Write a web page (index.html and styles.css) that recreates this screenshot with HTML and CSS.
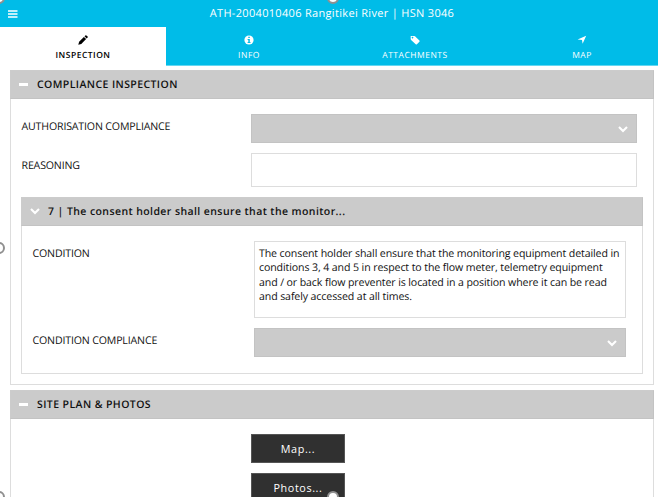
FILE: index.html
```
<!DOCTYPE html>
<html lang="en">
<head>
<meta charset="utf-8">
<title>Inspection</title>
<link rel="stylesheet" href="styles.css">
</head>
<body>
<header class="topbar">
  <svg class="menu" width="10" height="8" viewBox="0 0 10 8"><path d="M0 1h9.5M0 4h9.5M0 7h9.5" stroke="currentColor" stroke-width="1.4"/></svg>
  <h1 class="title">ATH-2004010406 Rangitikei River | HSN 3046</h1>
</header>
<nav class="tabs">
  <a class="tab active">
    <svg width="10" height="10" viewBox="0 0 10 10"><path d="M.3 9.7l.8-3 4.8-4.8 2.2 2.2-4.8 4.8zM6.5 1.3l.9-.9q.5-.5 1 0l1.2 1.2q.5.5 0 1l-.9.9z" fill="currentColor"/></svg>
    <span>INSPECTION</span>
  </a>
  <a class="tab">
    <svg width="10" height="10" viewBox="0 0 10 10"><circle cx="5" cy="5" r="4.6" fill="currentColor"/><path d="M4.3 1.7h1.5v1.4H4.3zM3.6 4h2.2v3h.7v1.1H3.6V7h.7V5h-.7z" class="cutout"/></svg>
    <span>INFO</span>
  </a>
  <a class="tab">
    <svg width="10" height="10" viewBox="0 0 10 10"><path fill-rule="evenodd" d="M.8.9h3.3q.5 0 .9.4l4.4 4.3q.6.6 0 1.2L6.9 9.3q-.6.6-1.2 0L1.1 4.9q-.4-.4-.4-.9V1zM2.5 1.8a.8.8 0 1 0 .01 0z" fill="currentColor"/></svg>
    <span>ATTACHMENTS</span>
  </a>
  <a class="tab">
    <svg width="10" height="10" viewBox="0 0 10 10"><path d="M9.2.8L5.6 8.8 5 5.1.6 4.5z" fill="currentColor"/></svg>
    <span>MAP</span>
  </a>
</nav>
<main class="content">
  <section class="panel">
    <h2 class="panel-head"><i class="dash"></i><span>COMPLIANCE INSPECTION</span></h2>
    <div class="panel-body">
      <div class="row">
        <label>AUTHORISATION COMPLIANCE</label>
        <div class="select"><svg width="10" height="7" viewBox="0 0 10 7"><path d="M1 1l4 4 4-4" class="chev"/></svg></div>
      </div>
      <div class="row">
        <label>REASONING</label>
        <div class="text reason"></div>
      </div>
      <section class="panel nested">
        <h2 class="panel-head"><svg width="10" height="7" viewBox="0 0 10 7"><path d="M1 1l4 4 4-4" class="chev"/></svg><span>7 | The consent holder shall ensure that the monitor...</span></h2>
        <div class="panel-body">
          <div class="row">
            <label>CONDITION</label>
            <div class="text condition">The consent holder shall ensure that the monitoring equipment detailed in<br>conditions 3, 4 and 5 in respect to the flow meter, telemetry equipment<br>and / or back flow preventer is located in a position where it can be read<br>and safely accessed at all times.</div>
          </div>
          <div class="row">
            <label>CONDITION COMPLIANCE</label>
            <div class="select"><svg width="10" height="7" viewBox="0 0 10 7"><path d="M1 1l4 4 4-4" class="chev"/></svg></div>
          </div>
        </div>
      </section>
    </div>
  </section>
  <section class="panel photos">
    <h2 class="panel-head"><i class="dash"></i><span>SITE PLAN &amp; PHOTOS</span></h2>
    <div class="buttons">
      <button>Map...</button>
      <button>Photos...</button>
    </div>
  </section>
</main>
<i class="handle top left"></i>
<i class="handle top center"></i>
<i class="handle middle left"></i>
<i class="handle bottom left"></i>
<i class="handle bottom center"></i>
</body>
</html>
```
FILE: styles.css
```
* { box-sizing: border-box; }
body {
  position: relative;
  margin: 0;
  width: 658px;
  height: 497px;
  overflow: hidden;
  background: #fff;
  color: #111;
  font-family: "Open Sans", sans-serif;
  font-size: 10.6px;
  text-rendering: geometricPrecision;
}
svg { display: block; flex: none; }
.topbar {
  height: 27px;
  display: grid;
  grid-template-columns: 30px 1fr 24px;
  align-items: center;
  background: #00bce8;
  color: #fff;
}
.menu { margin-left: 8px; }
.title {
  margin: 0;
  text-align: center;
  font-size: 11px;
  font-weight: 500;
  letter-spacing: .32px;
}
.tabs {
  display: grid;
  grid-template-columns: 166px 166px 166px 168px;
  height: 39px;
  background: #00bce8;
  border-bottom: 1px solid #64d7f1;
  color: #fff;
}
.tab {
  display: flex;
  flex-direction: column;
  align-items: center;
  padding-top: 8px;
  gap: 5px;
  font-size: 8.5px;
  line-height: 12px;
  font-weight: 500;
  letter-spacing: .5px;
}
.tab.active {
  margin-bottom: -1px;
  background: #fff;
  color: #000;
  font-weight: 600;
}
.cutout { fill: #00bce8; }
.content {
  padding: 4px 4px 0 10px;
}
.panel {
  border: 1px solid #ddd;
  height: 315px;
}
.panel-head {
  display: flex;
  align-items: center;
  gap: 8px;
  height: 29px;
  margin: -1px -1px 0;
  padding: 0 0 0 8px;
  background: #cbcbcb;
  border: 1px solid #c3c3c3;
  border-color: #ccc #c3c3c3 #c3c3c3 #ccc;
  color: #111;
  font-size: 10.5px;
  line-height: 15px;
  font-weight: 600;
  letter-spacing: .41px;
}
.panel-head span { padding-top: 1px; }
.dash { width: 9px; height: 3px; margin-right: 1px; background: #fff; }
.chev { fill: none; stroke: #fff; stroke-width: 2.1; }
.panel-body { padding: 15px 10px 0; }
.row {
  display: grid;
  grid-template-columns: 230px 386px;
  margin-bottom: 10px;
}
label { padding: 6px 0 0 .5px; line-height: 15px; letter-spacing: -.16px; }
.select {
  display: flex;
  align-items: center;
  justify-content: flex-end;
  height: 29px;
  padding: 2px 8px 0 0;
  background: #cbcbcb;
  border: 1px solid #c3c3c3;
}
.text { border: 1px solid #ddd; }
.reason { height: 34px; }
.nested { height: 177px; width: 622px; }
.nested .row { grid-template-columns: 222px 372px; }
.nested label { padding-top: 6px; }
.condition {
  height: 77px;
  padding: 5px 4px 4px;
  line-height: 14.3px;
  letter-spacing: -.11px;
  white-space: nowrap;
}
.photos { height: 130px; margin-top: 5px; }
.buttons {
  display: flex;
  flex-direction: column;
  gap: 10px;
  padding: 15px 0 0 240px;
}
button {
  width: 94px;
  height: 29px;
  padding: 0;
  border: 1px solid #555;
  background: #303030;
  color: #fff;
  font: 500 10.8px "Open Sans", sans-serif;
  letter-spacing: .6px;
}
.handle {
  position: absolute;
  width: 12px;
  height: 12px;
  border: 2px solid #909090;
  border-radius: 50%;
  background: #fff;
}
.left { left: -7px; }
.center { left: 327px; }
.top { top: -8px; }
.middle { top: 242px; }
.bottom { top: 491px; }
```
